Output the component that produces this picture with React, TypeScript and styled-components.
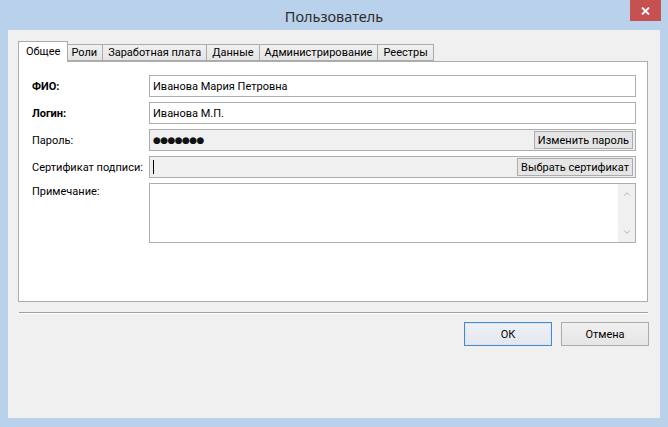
import styled, { createGlobalStyle } from 'styled-components';
import { ChevronUp, ChevronDown } from 'lucide-react';

const GlobalStyle = createGlobalStyle`
  html, body {
    margin: 0;
    padding: 0;
    background: #b9d1ea;
  }
  * {
    box-sizing: border-box;
  }
`;

const Window = styled.div`
  width: 668px;
  height: 427px;
  display: flex;
  flex-direction: column;
  background: #b9d1ea;
  font-family: Roboto, "Noto Sans", sans-serif;
  font-size: 11px;
  color: #000;
`;

const TitleBar = styled.div`
  height: 30px;
  display: grid;
  grid-template-columns: 1fr auto 1fr;
  align-items: start;
`;

const Title = styled.div`
  grid-column: 2;
  padding-top: 6px;
  font-family: "Noto Sans", sans-serif;
  font-size: 14.5px;
  color: #2d2d2d;
`;

const CloseButton = styled.div`
  grid-column: 3;
  justify-self: end;
  margin-right: 7px;
  width: 31px;
  height: 21px;
  background: #c75050;
  display: flex;
  align-items: center;
  justify-content: center;
`;

const Client = styled.div`
  flex: 1;
  margin: 0 8px 9px 8px;
  background: #f0f0f0;
  padding: 11px 12px 0 10px;
  display: flex;
  flex-direction: column;
`;

const TabStrip = styled.div`
  display: flex;
  align-items: flex-end;
  height: 20px;
  padding-left: 2px;
  position: relative;
  z-index: 1;
`;

const Tab = styled.div<{ $active?: boolean }>`
  height: ${p => (p.$active ? '21px' : '17px')};
  margin: ${p => (p.$active ? '0 -2px -1px -2px' : '0 0 0 -1px')};
  padding: ${p => (p.$active ? '2px 7px 0 7px' : '0 5px')};
  border: 1px solid #acacac;
  border-bottom: ${p => (p.$active ? 'none' : '1px solid #acacac')};
  background: ${p => (p.$active ? '#ffffff' : 'linear-gradient(#f0f0f0, #e5e5e5)')};
  display: flex;
  align-items: ${p => (p.$active ? 'flex-start' : 'center')};
  line-height: 15px;
  white-space: nowrap;
  position: relative;
  z-index: ${p => (p.$active ? 2 : 1)};

  &:first-child {
    margin-left: -2px;
  }
`;

const Panel = styled.div`
  width: 630px;
  height: 241px;
  background: #ffffff;
  border: 1px solid #acacac;
  padding: 13px 11px 0 13px;
`;

const Form = styled.div`
  display: grid;
  grid-template-columns: 117px 1fr;
  grid-auto-rows: 22px;
  row-gap: 5px;
  align-items: center;
`;

const Label = styled.div<{ $bold?: boolean }>`
  font-weight: ${p => (p.$bold ? 700 : 400)};
  white-space: nowrap;
`;

const NoteLabel = styled(Label)`
  align-self: start;
  padding-top: 2px;
`;

const Field = styled.div<{ $readonly?: boolean }>`
  height: 22px;
  border: 1px solid #abadb3;
  background: ${p => (p.$readonly ? '#f0f0f0' : '#ffffff')};
  display: flex;
  align-items: center;
  justify-content: space-between;
  padding: 0 1px 0 3px;
`;

const Dots = styled.span`
  font-family: "DejaVu Sans", sans-serif;
  font-size: 9px;
  letter-spacing: -0.6px;
  color: #111;
`;

const Caret = styled.span`
  width: 1px;
  height: 14px;
  background: #000;
`;

const InlineButton = styled.div`
  height: 18px;
  padding: 0 3px;
  margin-right: 1px;
  border: 1px solid #acacac;
  background: #e5e5e5;
  display: flex;
  align-items: center;
  white-space: nowrap;
`;

const NoteArea = styled.div`
  grid-row: span 2;
  height: 60px;
  align-self: start;
  border: 1px solid #abadb3;
  background: #ffffff;
  display: flex;
  justify-content: flex-end;
`;

const ScrollBar = styled.div`
  width: 17px;
  background: #f0f0f0;
  display: flex;
  flex-direction: column;
  justify-content: space-between;
  align-items: center;
  padding: 5px 0;
  color: #a6a6a6;
`;

const Separator = styled.div`
  margin: 10px 0 0 1px;
  height: 2px;
  border-top: 1px solid #a0a0a0;
  border-bottom: 1px solid #ffffff;
`;

const Footer = styled.div`
  display: flex;
  justify-content: flex-end;
  gap: 9px;
  margin-top: 8px;
  margin-right: -1px;
`;

const DialogButton = styled.div<{ $default?: boolean }>`
  width: 88px;
  height: 24px;
  border: 1px solid ${p => (p.$default ? '#4a8bc7' : '#acacac')};
  background: ${p => (p.$default ? 'linear-gradient(#eef2f7, #e3e8ee)' : 'linear-gradient(#f0f0f0, #e5e5e5)')};
  box-shadow: ${p => (p.$default ? 'inset 0 0 0 1px #d6e6f5' : 'none')};
  display: flex;
  align-items: center;
  justify-content: center;
`;

const tabs = ['Общее', 'Роли', 'Заработная плата', 'Данные', 'Администрирование', 'Реестры'];

export default function App() {
  return (
    <>
      <GlobalStyle />
      <Window>
        <TitleBar>
          <Title>Пользователь</Title>
          <CloseButton>
            <svg width="9" height="8" viewBox="0 0 9 8">
              <path d="M1 0.5 L8 7.5 M8 0.5 L1 7.5" stroke="#ffffff" strokeWidth="1.8" />
            </svg>
          </CloseButton>
        </TitleBar>
        <Client>
          <TabStrip>
            {tabs.map((t, i) => (
              <Tab key={t} $active={i === 0}>{t}</Tab>
            ))}
          </TabStrip>
          <Panel>
            <Form>
              <Label $bold>ФИО:</Label>
              <Field>Иванова Мария Петровна</Field>

              <Label $bold>Логин:</Label>
              <Field>Иванова М.П.</Field>

              <Label>Пароль:</Label>
              <Field $readonly>
                <Dots>●●●●●●●</Dots>
                <InlineButton>Изменить пароль</InlineButton>
              </Field>

              <Label>Сертификат подписи:</Label>
              <Field $readonly>
                <Caret />
                <InlineButton>Выбрать сертификат</InlineButton>
              </Field>

              <NoteLabel>Примечание:</NoteLabel>
              <NoteArea>
                <ScrollBar>
                  <ChevronUp size={10} strokeWidth={2} />
                  <ChevronDown size={10} strokeWidth={2} />
                </ScrollBar>
              </NoteArea>
            </Form>
          </Panel>
          <Separator />
          <Footer>
            <DialogButton $default>ОК</DialogButton>
            <DialogButton>Отмена</DialogButton>
          </Footer>
        </Client>
      </Window>
    </>
  );
}
